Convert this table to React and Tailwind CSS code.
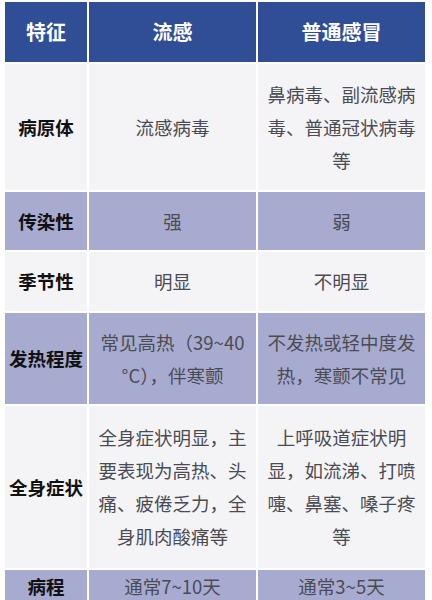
import React from "react";

const font = { fontFamily: '"Noto Sans CJK SC", "Noto Sans", sans-serif' };

const rows = [
  { name: "病原体", a: ["流感病毒"], b: ["鼻病毒、副流感病", "毒、普通冠状病毒", "等"], h: "h-[126px]", tone: "light" },
  { name: "传染性", a: ["强"], b: ["弱"], h: "h-[58px]", tone: "purple" },
  { name: "季节性", a: ["明显"], b: ["不明显"], h: "h-[59px]", tone: "light" },
  { name: "发热程度", a: ["常见高热（39~40", "°C），伴寒颤"], b: ["不发热或轻中度发", "热，寒颤不常见"], h: "h-[91px]", tone: "purple" },
  {
    name: "全身症状",
    a: ["全身症状明显，主", "要表现为高热、头", "痛、疲倦乏力，全", "身肌肉酸痛等"],
    b: ["上呼吸道症状明", "显，如流涕、打喷", "嚏、鼻塞、嗓子疼", "等"],
    h: "h-[162px]",
    tone: "light",
  },
  { name: "病程", a: ["通常7~10天"], b: ["通常3~5天"], h: "h-[31px]", tone: "purple" },
];

function Cell({ lines, bg, bold }) {
  return (
    <div
      className={`flex flex-col items-center justify-center text-center ${bg} ${
        bold ? "font-bold text-[#111111] text-[18.5px]" : "text-[#4b4b53] text-[18.5px]"
      } leading-[33px]`}
    >
      {lines.map((l, i) => (
        <span key={i} className="whitespace-nowrap">
          {l}
        </span>
      ))}
    </div>
  );
}

export default function App() {
  return (
    <div className="w-[432px] h-[600px] bg-white overflow-hidden" style={font}>
      <div className="pl-[5px] pt-[2px] flex flex-col gap-[2px]">
        <div className="grid grid-cols-[82px_167px_167px] gap-x-[2px] h-[60px]">
          {["特征", "流感", "普通感冒"].map((t) => (
            <div
              key={t}
              className="flex items-center justify-center bg-[#2f4e95] text-white font-bold text-[20px]"
            >
              {t}
            </div>
          ))}
        </div>
        {rows.map((r) => {
          const bg = r.tone === "light" ? "bg-[#f4f4f6]" : "bg-[#a8abd0]";
          return (
            <div key={r.name} className={`grid grid-cols-[82px_167px_167px] gap-x-[2px] ${r.h}`}>
              <Cell lines={[r.name]} bg={bg} bold />
              <Cell lines={r.a} bg={bg} />
              <Cell lines={r.b} bg={bg} />
            </div>
          );
        })}
      </div>
    </div>
  );
}
